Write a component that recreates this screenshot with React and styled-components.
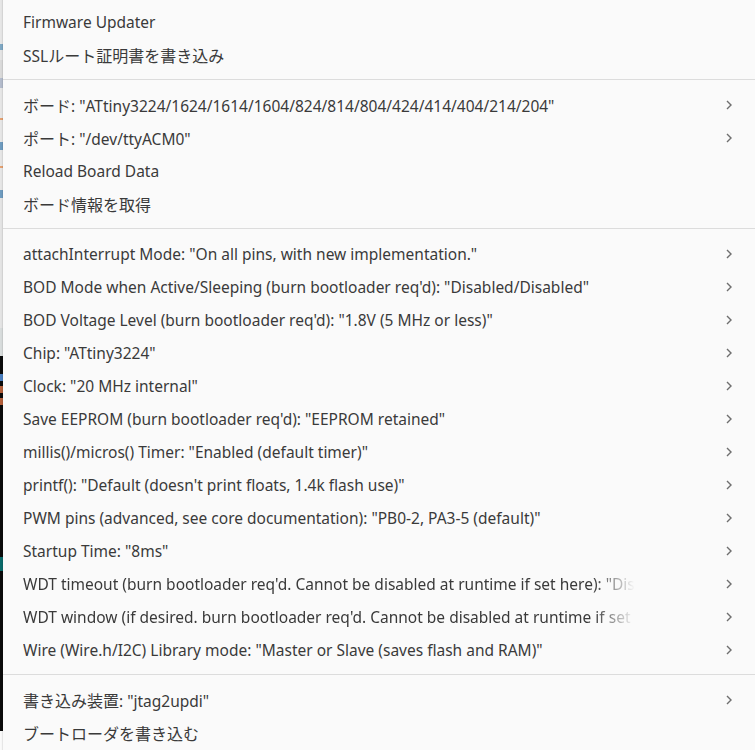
import React from "react";
import styled, { createGlobalStyle } from "styled-components";

const GlobalStyle = createGlobalStyle`
	html, body {
		margin: 0;
		padding: 0;
		background: #fafafa;
	}
	body {
		font-family: "Noto Sans", "Noto Sans CJK JP", sans-serif;
		-webkit-font-smoothing: antialiased;
	}
`;

const sections = [
	[{ label: "Firmware Updater" }, { label: "SSLルート証明書を書き込み" }],
	[
		{ label: 'ボード: "ATtiny3224/1624/1614/1604/824/814/804/424/414/404/214/204"', sub: true },
		{ label: 'ポート: "/dev/ttyACM0"', sub: true },
		{ label: "Reload Board Data" },
		{ label: "ボード情報を取得" },
	],
	[
		{ label: 'attachInterrupt Mode: "On all pins, with new implementation."', sub: true },
		{ label: 'BOD Mode when Active/Sleeping (burn bootloader req\'d): "Disabled/Disabled"', sub: true },
		{ label: 'BOD Voltage Level (burn bootloader req\'d): "1.8V (5 MHz or less)"', sub: true },
		{ label: 'Chip: "ATtiny3224"', sub: true },
		{ label: 'Clock: "20 MHz internal"', sub: true },
		{ label: 'Save EEPROM (burn bootloader req\'d): "EEPROM retained"', sub: true },
		{ label: 'millis()/micros() Timer: "Enabled (default timer)"', sub: true },
		{ label: 'printf(): "Default (doesn\'t print floats, 1.4k flash use)"', sub: true },
		{ label: 'PWM pins (advanced, see core documentation): "PB0-2, PA3-5 (default)"', sub: true },
		{ label: 'Startup Time: "8ms"', sub: true },
		{
			label: 'WDT timeout (burn bootloader req\'d. Cannot be disabled at runtime if set here): "Disabled"',
			sub: true,
			clipped: true,
		},
		{
			label: 'WDT window (if desired. burn bootloader req\'d. Cannot be disabled at runtime if set here): "No delay before reset"',
			sub: true,
			clipped: true,
		},
		{ label: 'Wire (Wire.h/I2C) Library mode: "Master or Slave (saves flash and RAM)"', sub: true },
	],
	[{ label: '書き込み装置: "jtag2updi"', sub: true }, { label: "ブートローダを書き込む" }],
];

// bits of the editor window peeking out on the left
const stripParts = [
	{ h: 44, c: "#e6e6e6" },
	{ h: 6, c: "#7fa8c4" },
	{ h: 10, c: "#e4e4e4" },
	{ h: 18, c: "#dadada" },
	{ h: 10, c: "#b4bccc" },
	{ h: 30, c: "#e6e6e6" },
	{ h: 2, c: "#e4a070" },
	{ h: 22, c: "#e6e6e6" },
	{ h: 8, c: "#6f9cc0" },
	{ h: 16, c: "#e6e6e6" },
	{ h: 2, c: "#e4a070" },
	{ h: 22, c: "#e6e6e6" },
	{ h: 8, c: "#6f9cc0" },
	{ h: 130, c: "#e4e4e4" },
	{ h: 28, c: "#d8dcdc" },
	{ h: 18, c: "#0b0b0b" },
	{ h: 7, c: "#4a7fc0" },
	{ h: 5, c: "#0b0b0b" },
	{ h: 7, c: "#b5603a" },
	{ h: 5, c: "#0b0b0b" },
	{ h: 7, c: "#b5603a" },
	{ h: 152, c: "#0b0b0b" },
	{ h: 14, c: "#0a6b6b" },
	{ h: 160, c: "#0b0b0b" },
];

const cjkRun = /([\u3000-\u9fff\uff00-\uffef]+)/;

// japanese runs render a touch larger than the latin text
const renderLabel = (text) =>
	text.split(cjkRun).map((part, i) => (i % 2 ? <Cjk key={i}>{part}</Cjk> : part));

const Chevron = () => (
	<svg width="8" height="12" viewBox="0 0 8 12">
		<path d="M2 2 L6 6 L2 10" fill="none" stroke="#6e6e6e" strokeWidth="1.4" />
	</svg>
);

const App = () => {
	return (
		<>
			<GlobalStyle />
			<Page>
				<Strip>
					{stripParts.map((p, i) => (
						<StripPart key={i} $h={p.h} $c={p.c} />
					))}
				</Strip>
				<Menu>
					{sections.map((items, si) => (
						<React.Fragment key={si}>
							{si > 0 && <Separator />}
							{items.map((item) => (
								<Row key={item.label}>
									<Label $clipped={item.clipped}>{renderLabel(item.label)}</Label>
									<Arrow>{item.sub && <Chevron />}</Arrow>
								</Row>
							))}
						</React.Fragment>
					))}
				</Menu>
			</Page>
		</>
	);
};

const Page = styled.div`
	display: flex;
	width: 755px;
	height: 750px;
	overflow: hidden;
`;

const Strip = styled.div`
	display: flex;
	flex-direction: column;
	width: 3px;
	flex-shrink: 0;
`;

const StripPart = styled.div`
	height: ${(p) => p.$h}px;
	background: ${(p) => p.$c};
	flex-shrink: 0;
`;

const Menu = styled.div`
	flex: 1;
	display: flex;
	flex-direction: column;
	padding-top: 5px;
	background: #fafafa;
	box-shadow: -1px 0 1px rgba(0, 0, 0, 0.08);
`;

const Row = styled.div`
	display: flex;
	align-items: center;
	height: 33px;
	flex-shrink: 0;
	padding: 0 22px 0 20px;
	color: #3a3a3a;
	font-size: 15.5px;
`;

const Label = styled.div`
	flex: 1;
	min-width: 0;
	max-width: 612px;
	white-space: nowrap;
	overflow: hidden;
	${(p) =>
		p.$clipped &&
		`
		-webkit-mask-image: linear-gradient(to right, #000 calc(100% - 42px), transparent);
		mask-image: linear-gradient(to right, #000 calc(100% - 42px), transparent);
	`}
`;

const Cjk = styled.span`
	font-family: "Noto Sans CJK JP", sans-serif;
	font-size: 16px;
`;

const Arrow = styled.div`
	display: flex;
	align-items: center;
	width: 8px;
	margin-left: auto;
`;

const Separator = styled.div`
	height: 17px;
	flex-shrink: 0;
	display: flex;
	flex-direction: column;
	justify-content: flex-start;
	&::after {
		content: "";
		display: block;
		margin-top: 8px;
		height: 1px;
		background: #dcdcdc;
	}
`;

export default App;
